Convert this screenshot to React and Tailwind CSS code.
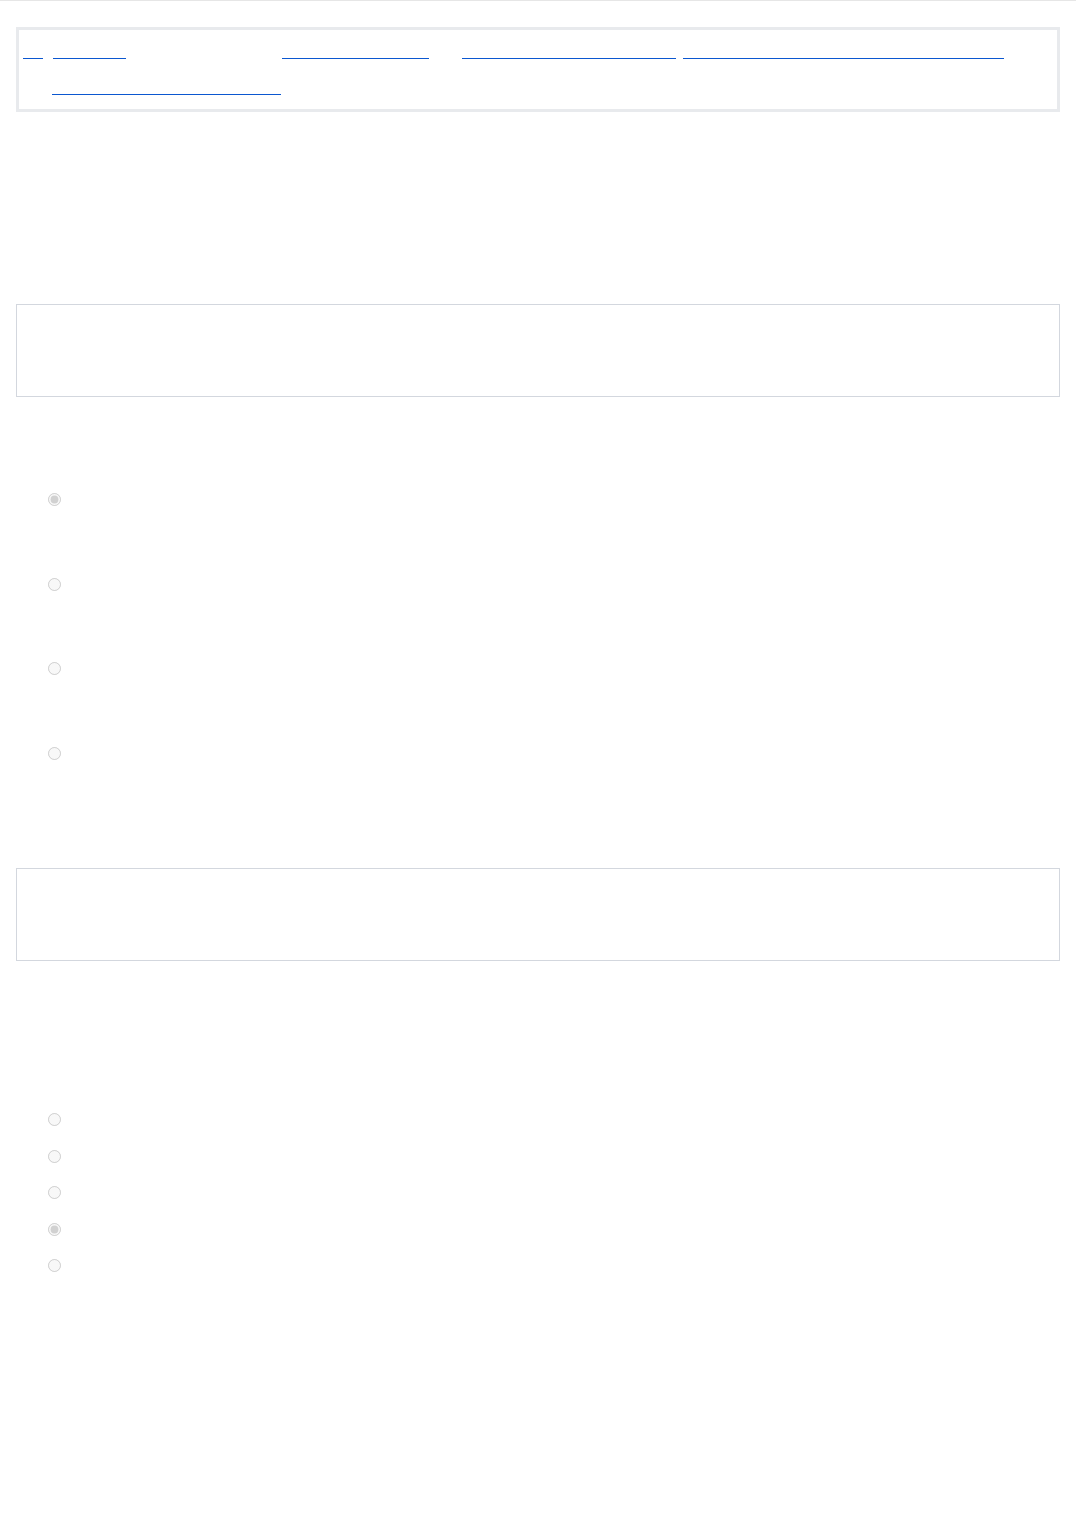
import React from 'react';

const topLinks = [
  { ml: 4, w: 20 },
  { ml: 10, w: 73 },
  { ml: 156, w: 147 },
  { ml: 33, w: 214 },
  { ml: 7, w: 321 },
];

const RadioRow = ({ checked, className }) => (
  <div className={`flex h-[13px] items-center pl-[48px] ${className || ''}`}>
    <input type="radio" disabled defaultChecked={checked} className="m-0 h-[13px] w-[13px]" />
  </div>
);

export default function App() {
  return (
    <div className="min-h-[1516px] w-full bg-white font-['Liberation_Sans',Arial,sans-serif]">
      <div className="h-px bg-[#e6e6e6]" />

      {/* links box */}
      <div className="mx-4 mt-[26px] h-[85px] border-[3px] border-[#e8eaed]">
        <div className="mt-[28px] flex h-px">
          {topLinks.map((l, i) => (
            <span key={i} className="h-px bg-[#0b57d0]" style={{ marginLeft: l.ml, width: l.w }} />
          ))}
        </div>
        <div className="mt-[35px] flex h-px">
          <span className="ml-[33px] h-px w-[229px] bg-[#0b57d0]" />
        </div>
      </div>

      <div className="mx-4 mt-[192px] h-[93px] border border-[#d3d7de]" />

      <div className="mt-[96px] flex flex-col">
        <RadioRow checked />
        <RadioRow className="mt-[72px]" />
        <RadioRow className="mt-[71px]" />
        <RadioRow className="mt-[72px]" />
      </div>

      <div className="mx-4 mt-[108px] h-[93px] border border-[#d3d7de]" />

      <div className="mt-[152px] flex flex-col gap-[23.5px]">
        <RadioRow />
        <RadioRow />
        <RadioRow />
        <RadioRow checked />
        <RadioRow />
      </div>
    </div>
  );
}
